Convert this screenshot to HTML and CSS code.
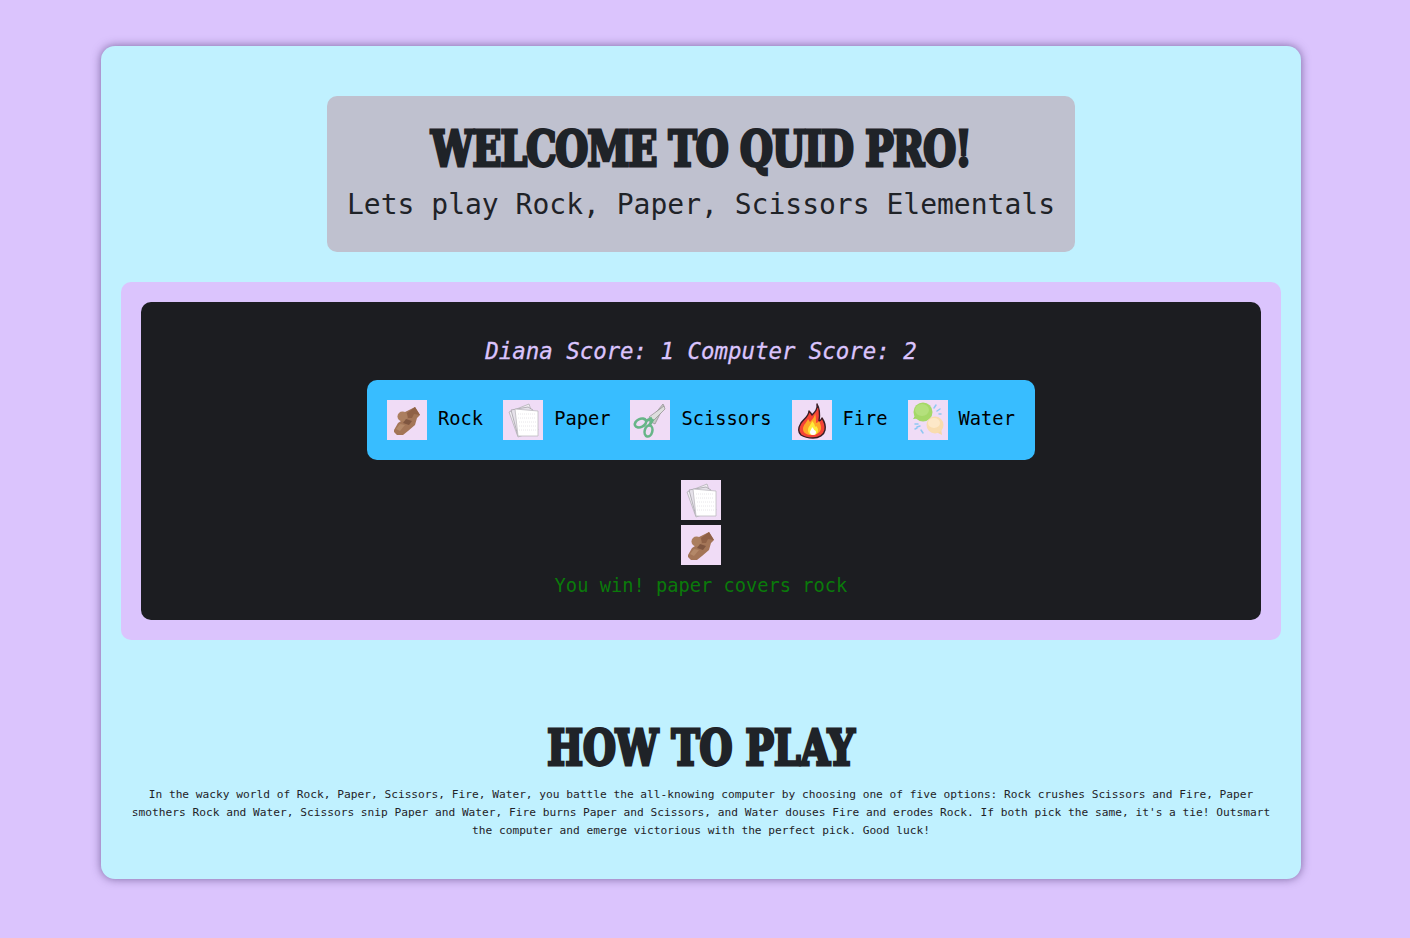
FILE: index.html
```html
<!DOCTYPE html>
<html>
<head>
    <meta charset="UTF-8">
    <meta name="viewport" content="width=device-width, initial-scale=1.0">
    <title>Quid Pro</title>
    <link rel="stylesheet" href="styles.css">
</head>
<body>
    <svg class="sprites" width="0" height="0">
        <symbol id="rock" viewBox="0 0 40 40">
            <path d="M7 30l4-7 6-4 1-7 10-5 5 8-3 3-2 7-7 6-5 4-6 0-3-3z" fill="#a37557"/>
            <circle cx="15.500" cy="16.500" r="5" fill="#ab7e5e"/>
            <path d="M20 13l8-6 5 8-6-1-2 4-4 0z" fill="#8f6146"/>
            <path d="M19 19l6 2-3 4-6-2z" fill="#7f5640"/>
            <path d="M9 29l4-5 5 1-5 6z" fill="#b38868"/>
        </symbol>
        <symbol id="paper" viewBox="0 0 40 40">
            <path d="M6 12l20-8 9 26-20 7z" fill="#f1eef3" stroke="#b4b1b8" stroke-width=".8"/>
            <path d="M8 10l17-3 5 3-15 26z" fill="#e6e2ea" stroke="#a4a1a8" stroke-width=".8"/>
            <path d="M12 9l23 2v25H15z" fill="#fff" stroke="#bdbac0" stroke-width=".8"/>
            <path d="M15 14h17M15 18h18M16 22h17M16 26h17M16 30h17" stroke="#e2e0e4" stroke-width=".8" stroke-dasharray="1 1"/>
        </symbol>
        <symbol id="scissors" viewBox="0 0 40 40">
            <path d="M19 21L33 4l1 2-9 18z" fill="#c9c9c9" stroke="#8d8d8d" stroke-width=".7"/>
            <path d="M19 17L34 6l1 3-13 13z" fill="#dedede" stroke="#8d8d8d" stroke-width=".7"/>
            <path d="M23 19l-4 7M22 18l-6 3" stroke="#67b588" stroke-width="3" fill="none"/>
            <ellipse cx="10.500" cy="23" rx="6" ry="4" transform="rotate(-25 10.500 23)" fill="none" stroke="#67b588" stroke-width="2.600"/>
            <ellipse cx="18.500" cy="31" rx="3.800" ry="5.600" transform="rotate(15 18.500 31)" fill="none" stroke="#67b588" stroke-width="2.600"/>
        </symbol>
        <symbol id="fire" viewBox="0 0 40 40">
            <path d="M25 4c1 5-2 8-5 11-1-2-2-3-3-4 0 5-5 8-8 12-3 5-3 9 0 12 3 2 7 3 12 3 6 0 11-3 12-8 1-5-1-9-3-12-1 2-2 3-3 3 1-6 1-12-2-17z" fill="#f44336" stroke="#3b1d24" stroke-width="1.400" stroke-linejoin="round"/>
            <path d="M23 13c0 4-3 7-5 9-1-1-1-2-2-3-1 3-5 6-5 10 0 4 4 6 9 6 5 0 9-3 9-7 0-3-1-5-2-7-1 1-2 2-3 2 0-3 0-6-1-10z" fill="#ffa726"/>
            <path d="M20 21c0 3-4 5-4 9 0 3 2 5 5 5s5-2 5-5c0-2-1-3-2-4l-1 1c0-2-1-4-3-6z" fill="#ffeb3b"/>
            <path d="M20 27c0 2-2 3-2 5s1 3 3 3 3-1 3-3c0-1-1-2-2-2 0-1-1-2-2-3z" fill="#fff"/>
        </symbol>
        <symbol id="water" viewBox="0 0 40 40">
            <path d="M5 19l4-6 4 5z" fill="#9bd25f"/>
            <circle cx="15" cy="12" r="9.500" fill="#a5d867"/>
            <ellipse cx="14" cy="10" rx="7" ry="6" fill="#b4e07c"/>
            <path d="M34 35l-6-3 5-4z" fill="#f7d7a6"/>
            <circle cx="27" cy="25" r="8.500" fill="#f9dcae"/>
            <ellipse cx="26" cy="23" rx="6" ry="5" fill="#fde8c8"/>
            <path d="M26 8l2-3M29 11l3-2M31 14h2M12 26l-3 1M7 24l3 0M13 30l2 3M7 29l2-1" stroke="#8fc8f2" stroke-width="1.500" stroke-linecap="round"/>
        </symbol>
    </svg>

    <div class="card">
        <header class="banner">
            <h1 class="display">WELCOME TO QUID PRO!</h1>
            <h2 class="tagline">Lets play Rock, Paper, Scissors Elementals</h2>
        </header>

        <section class="game">
            <div class="board">
                <h2 class="score">Diana Score: 1 Computer Score: 2</h2>
                <div class="choices">
                    <div class="choice">
                        <svg class="pic"><use href="#rock"/></svg>
                        <h3>Rock</h3>
                    </div>
                    <div class="choice">
                        <svg class="pic"><use href="#paper"/></svg>
                        <h3>Paper</h3>
                    </div>
                    <div class="choice">
                        <svg class="pic"><use href="#scissors"/></svg>
                        <h3>Scissors</h3>
                    </div>
                    <div class="choice">
                        <svg class="pic"><use href="#fire"/></svg>
                        <h3>Fire</h3>
                    </div>
                    <div class="choice">
                        <svg class="pic"><use href="#water"/></svg>
                        <h3>Water</h3>
                    </div>
                </div>
                <div class="round">
                    <svg class="pic"><use href="#paper"/></svg>
                    <svg class="pic"><use href="#rock"/></svg>
                </div>
                <h3 class="result">You win! paper covers rock</h3>
            </div>
        </section>

        <section class="rules">
            <h2 class="display">HOW TO PLAY</h2>
            <p>In the wacky world of Rock, Paper, Scissors, Fire, Water, you battle the all-knowing computer by choosing one of five options: Rock crushes Scissors and Fire, Paper smothers Rock and Water, Scissors snip Paper and Water, Fire burns Paper and Scissors, and Water douses Fire and erodes Rock. If both pick the same, it's a tie! Outsmart the computer and emerge victorious with the perfect pick. Good luck!</p>
        </section>
    </div>
</body>
</html>
```

FILE: styles.css
```css
body {
    font-family: 'DejaVu Sans Mono', 'Liberation Mono', monospace;
    background-color: #dbc4fd;
    color: #1f2328;
    display: flex;
    justify-content: center;
    margin: 0;
    padding: 46px 8px 59px 0;
}
h1, h2, h3, p {
    margin: 0;
}
.sprites {
    position: absolute;
}
.card {
    width: 1200px;
    box-sizing: border-box;
    padding: 50px 20px 40px;
    background: #c0f1ff;
    border-radius: 14px;
    box-shadow: 0 0 10px rgba(70, 50, 110, 0.65);
    display: flex;
    flex-direction: column;
    align-items: center;
}
.display {
    font-family: 'DejaVu Serif', serif;
    font-stretch: condensed;
    font-weight: 700;
    font-size: 48px;
    -webkit-text-stroke: 3px #1f2328;
    text-align: center;
    white-space: nowrap;
    transform: scaleX(0.875);
}
.banner {
    width: 748px;
    height: 156px;
    box-sizing: border-box;
    padding: 23px 20px 20px;
    background: #bfc1cf;
    border-radius: 10px;
}
.banner h1 {
    line-height: 60px;
    letter-spacing: -1px;
}
.tagline {
    margin-top: 8px;
    font-size: 28px;
    line-height: 36px;
    font-weight: 400;
    text-align: center;
    white-space: nowrap;
}
.game {
    align-self: stretch;
    margin-top: 30px;
    padding: 20px;
    background: #dbc4fd;
    border-radius: 10px;
}
.board {
    height: 318px;
    box-sizing: border-box;
    padding-top: 34px;
    background: #1c1d21;
    border-radius: 10px;
    display: flex;
    flex-direction: column;
    align-items: center;
}
.score {
    font-size: 22.4px;
    line-height: 30px;
    font-style: italic;
    font-weight: 400;
    -webkit-text-stroke: 0.3px #dbc4fd;
    color: #dbc4fd;
}
.choices {
    margin-top: 14px;
    padding: 20px;
    background: #38bdff;
    border-radius: 10px;
    display: flex;
    gap: 20px;
    color: #000;
}
.choice {
    display: flex;
    align-items: center;
    gap: 11px;
}
.choice h3 {
    font-size: 18.72px;
    font-weight: 400;
    line-height: 40px;
    margin-top: -3px;
}
.pic {
    display: block;
    width: 40px;
    height: 40px;
    background: #f0dcf6;
}
.round {
    margin-top: 20px;
    display: flex;
    flex-direction: column;
    gap: 5px;
}
.result {
    margin-top: 9px;
    font-size: 18.72px;
    line-height: 24px;
    font-weight: 400;
    color: #0a7a0a;
}
.rules {
    margin-top: 78px;
    text-align: center;
}
.rules h2 {
    line-height: 60px;
}
.rules p {
    margin-top: 8px;
    margin-bottom: -1px;
    font-size: 11.2px;
    line-height: 18px;
}
```
